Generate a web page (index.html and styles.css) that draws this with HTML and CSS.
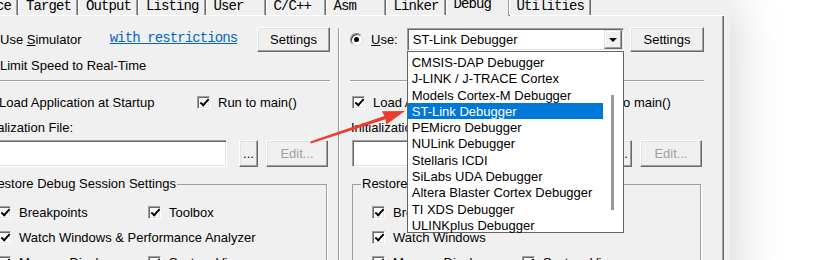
FILE: index.html
```html
<!DOCTYPE html>
<html lang="en">

<head>
  <meta charset="UTF-8" />
  <meta name="viewport" content="width=device-width, initial-scale=1.0" />
  <title>Options for Target - Debug</title>
  <link rel="stylesheet" href="styles.css">
</head>

<body>
  <div class="sheet">
    <ul class="tabs">
      <li>Device</li>
      <li>Target</li>
      <li>Output</li>
      <li>Listing</li>
      <li>User</li>
      <li>C/C++</li>
      <li>Asm</li>
      <li>Linker</li>
      <li class="active">Debug</li>
      <li>Utilities</li>
    </ul>

    <div class="page">
      <!-- 左边：软件仿真 -->
      <div class="pane">
        <div class="row top">
          <span class="radio"></span>
          <span class="label sim">Use <u>S</u>imulator</span>
          <a href="#" class="link">with restrictions</a>
          <button class="btn settings">Settings</button>
        </div>
        <div class="row speed">
          <span class="check"></span>
          <span>Limit Speed to Real-Time</span>
        </div>
        <div class="sep"></div>
        <div class="row load">
          <label class="opt"><span class="check on"></span>Load Application at Startup</label>
          <label class="opt"><span class="check on"></span>Run to main()</label>
        </div>
        <div class="row init">Initialization File:</div>
        <div class="row file">
          <span class="field"></span>
          <button class="btn more">...</button>
          <button class="btn edit" disabled>Edit...</button>
        </div>
        <fieldset class="group">
          <legend>Restore Debug Session Settings</legend>
          <div class="grid">
            <label class="opt"><span class="check on"></span>Breakpoints</label>
            <label class="opt"><span class="check on"></span>Toolbox</label>
            <label class="opt span"><span class="check on"></span>Watch Windows &amp; Performance Analyzer</label>
            <label class="opt"><span class="check on"></span>Memory Display</label>
            <label class="opt"><span class="check on"></span>System Viewer</label>
          </div>
        </fieldset>
      </div>

      <div class="divider"></div>

      <!-- 右边：硬件调试器 -->
      <div class="pane">
        <div class="row top">
          <span class="radio on"></span>
          <span class="label"><u>U</u>se:</span>
          <div class="combo">
            <span class="combo-text">ST-Link Debugger</span>
            <span class="drop"></span>
            <!-- 下拉列表 -->
            <div class="list">
              <ul>
                <li>CMSIS-DAP Debugger</li>
                <li>J-LINK / J-TRACE Cortex</li>
                <li>Models Cortex-M Debugger</li>
                <li class="sel">ST-Link Debugger</li>
                <li>PEMicro Debugger</li>
                <li>NULink Debugger</li>
                <li>Stellaris ICDI</li>
                <li>SiLabs UDA Debugger</li>
                <li>Altera Blaster Cortex Debugger</li>
                <li>TI XDS Debugger</li>
                <li>ULINKplus Debugger</li>
              </ul>
              <div class="scroll"><span class="thumb"></span></div>
            </div>
          </div>
          <button class="btn settings wide">Settings</button>
        </div>
        <div class="row speed"></div>
        <div class="sep"></div>
        <div class="row load">
          <label class="opt"><span class="check on"></span>Load Application at Startup</label>
          <label class="opt"><span class="check on"></span>Run to main()</label>
        </div>
        <div class="row init">Initialization File:</div>
        <div class="row file">
          <span class="field"></span>
          <button class="btn more">...</button>
          <button class="btn edit" disabled>Edit...</button>
        </div>
        <fieldset class="group">
          <legend>Restore Debug Session Settings</legend>
          <div class="grid">
            <label class="opt"><span class="check on"></span>Breakpoints</label>
            <label class="opt"><span class="check on"></span>Toolbox</label>
            <label class="opt span"><span class="check on"></span>Watch Windows</label>
            <label class="opt"><span class="check on"></span>Memory Display</label>
            <label class="opt"><span class="check on"></span>System Viewer</label>
          </div>
        </fieldset>
      </div>
    </div>
  </div>

  <!-- 红色标注箭头 -->
  <svg class="arrow" width="829" height="260" viewBox="0 0 829 260">
    <polygon fill="#ee3b2f"
      points="310.3,141.6 384.4,115.9 381.9,111.3 405,111 386.3,124.6 385.6,119.3 310.9,143.4" />
  </svg>
</body>

</html>
```

FILE: styles.css
```css
* {
  box-sizing: border-box;
}

html,
body {
  margin: 0;
  height: 260px;
  overflow: hidden;
  background: #fff;
}

body {
  position: relative;
  font-family: "Liberation Sans", Arial, sans-serif;
  font-size: 13px;
  color: #000;
}

.sheet {
  margin-left: -40px;
  width: 770px;
  height: 300px;
  background: #f0f0f0;
  box-shadow: 0 0 50px rgba(0, 0, 0, 0.2);
}

/* 标签页 */
.tabs {
  margin: 0 6px 0 -2px;
  padding: 0;
  list-style: none;
  display: flex;
  height: 16px;
  border-bottom: 1px solid #fff;
  font-family: "Liberation Mono", "Courier New", monospace;
  font-size: 14px;
  letter-spacing: -0.9px;
  line-height: 12px;
}

.tabs li {
  min-width: 60px;
  height: 15px;
  padding: 0 6px 0 7px;
  border-left: 1px solid #fff;
  border-right: 1px solid #696969;
  box-shadow: inset -1px 0 #a0a0a0;
  white-space: nowrap;
}

.tabs li.active {
  min-width: 64px;
  margin: -2px -1px 0 0;
  height: 18px;
  background: #f0f0f0;
}

.page {
  display: flex;
  height: 284px;
  margin-right: 6px;
  border-right: 1px solid #696969;
  box-shadow: inset -1px 0 #a0a0a0;
}

.pane {
  flex-shrink: 0;
  width: 354px;
  margin-left: 16px;
}

.divider {
  width: 2px;
  margin: 12px 0 0 8px;
  border-left: 1px solid #a0a0a0;
  border-right: 1px solid #fff;
}

.divider + .pane {
  margin-left: 10px;
}

.row {
  display: flex;
  align-items: center;
  height: 16px;
  white-space: nowrap;
}

.row.top {
  height: 25px;
  margin-top: 11px;
}

.row.speed {
  margin-top: 5px;
}

.row.speed .check {
  margin: 0 8px 0 3px;
}

.sep {
  margin-top: 7px;
  border-top: 1px solid #a0a0a0;
  border-bottom: 1px solid #fff;
}

.row.load {
  display: grid;
  grid-template-columns: 219px auto;
  margin-top: 12px;
  padding-left: 2px;
}

.row.init {
  margin-top: 9px;
  padding-left: 1px;
}

.row.file {
  height: 27px;
  margin-top: 5px;
  padding-left: 2px;
}

.label {
  margin-left: 8px;
}

.label.sim {
  margin-left: 11px;
}

.link {
  margin: -3px 0 0 28px;
  color: #0066cc;
  font-family: "Liberation Mono", "Courier New", monospace;
  font-size: 14px;
  letter-spacing: -0.9px;
}

/* 控件 */
.opt {
  display: flex;
  align-items: center;
  gap: 8px;
  white-space: nowrap;
}

.check {
  width: 13px;
  height: 13px;
  flex-shrink: 0;
  display: inline-flex;
  align-items: center;
  justify-content: center;
  background: #fff;
  border: 1px solid;
  border-color: #a0a0a0 #fff #fff #a0a0a0;
  box-shadow: inset 1px 1px #696969, inset -1px -1px #e3e3e3;
}

.check.on::after {
  content: "";
  width: 7px;
  height: 3px;
  margin: -2px 0 0 1px;
  border-left: 2px solid #000;
  border-bottom: 2px solid #000;
  transform: rotate(-48deg);
}

.radio {
  width: 13px;
  height: 13px;
  flex-shrink: 0;
  display: inline-flex;
  align-items: center;
  justify-content: center;
  border-radius: 50%;
  background: #fff;
  border: 1px solid;
  border-color: #808080 #e3e3e3 #e3e3e3 #808080;
  box-shadow: inset 1px 1px #404040;
}

.radio.on::after {
  content: "";
  width: 5px;
  height: 5px;
  border-radius: 50%;
  background: #000;
}

.btn {
  height: 25px;
  padding: 0;
  font: inherit;
  color: #000;
  background: #f0f0f0;
  border: 1px solid;
  border-color: #fff #696969 #696969 #fff;
  box-shadow: inset -1px -1px #a0a0a0, inset 1px 1px #e3e3e3;
}

.btn.settings {
  width: 73px;
  margin-left: auto;
}

.btn.settings.wide {
  width: 74px;
}

.btn.more {
  width: 19px;
  height: 27px;
  margin-left: 12px;
}

.btn.edit {
  width: 62px;
  height: 27px;
  margin-left: 8px;
  color: #a0a0a0;
}

.field {
  width: 249px;
  height: 27px;
  background: #fff;
  border: 1px solid;
  border-color: #a0a0a0 #fff #fff #a0a0a0;
  box-shadow: inset 1px 1px #696969, inset -1px -1px #e3e3e3;
}

/* 分组框 */
.group {
  width: 349px;
  margin: 9px 0 0 2px;
  padding: 12px 0 0 19px;
  border: 1px solid #a0a0a0;
  box-shadow: 1px 1px 0 #fff;
}

.group legend {
  margin-left: -11px;
  padding: 0 1px;
  line-height: 16px;
  white-space: nowrap;
}

.grid {
  display: grid;
  grid-template-columns: 150px auto;
  grid-auto-rows: 16px;
  row-gap: 9px;
}

.grid .span {
  grid-column: 1 / -1;
}

/* 下拉框 */
.combo {
  position: relative;
  display: flex;
  align-items: center;
  width: 217px;
  height: 23px;
  margin-left: 9px;
  background: #fff;
  border: 1px solid;
  border-color: #a0a0a0 #fff #fff #a0a0a0;
  box-shadow: inset 1px 1px #696969, inset -1px -1px #e3e3e3;
}

.combo-text {
  padding-left: 5px;
}

.drop {
  display: flex;
  align-items: center;
  justify-content: center;
  width: 18px;
  height: 19px;
  margin: 0 1px 0 auto;
  background: #f0f0f0;
  border: 1px solid;
  border-color: #e3e3e3 #696969 #696969 #e3e3e3;
  box-shadow: inset -1px -1px #a0a0a0, inset 1px 1px #fff;
}

.drop::after {
  content: "";
  border-top: 4px solid #000;
  border-left: 4px solid transparent;
  border-right: 4px solid transparent;
}

.list {
  position: absolute;
  top: calc(100% + 1px);
  left: -1px;
  z-index: 2;
  display: flex;
  width: 217px;
  height: 182px;
  background: #fff;
  border: 1px solid #646464;
}

.list ul {
  flex: 1;
  margin: 0;
  padding: 2px 0 0;
  list-style: none;
}

.list li {
  height: 16.3px;
  line-height: 17px;
  padding-left: 4px;
  white-space: nowrap;
}

.list li.sel {
  background: #0078d7;
  color: #fff;
}

.scroll {
  width: 20px;
  display: flex;
  justify-content: center;
}

.thumb {
  width: 3px;
  height: 115px;
  margin-top: 43px;
  background: #999;
}

.arrow {
  position: absolute;
  left: 0;
  top: 0;
  pointer-events: none;
}
```
